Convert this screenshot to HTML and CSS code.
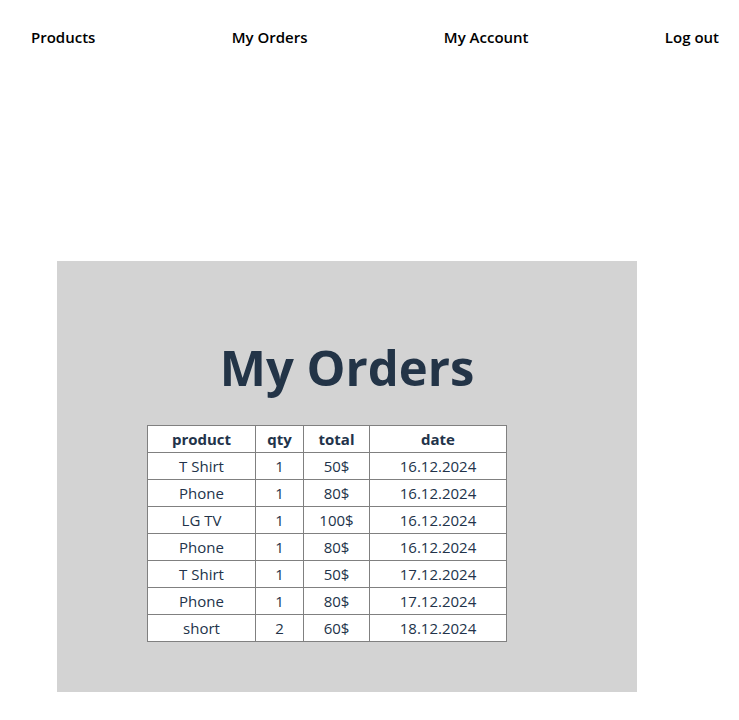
FILE: index.html
```html
<!DOCTYPE html>
<html>
<head>
<meta charset="utf-8">
<link rel="stylesheet" href="styles.css">
</head>
<body>
<nav class="nav">
  <a class="nav-link" href="#">Products</a>
  <a class="nav-link" href="#">My Orders</a>
  <a class="nav-link" href="#">My Account</a>
  <a class="nav-link" href="#">Log out</a>
</nav>
<main class="panel">
  <h1 class="title">My Orders</h1>
  <table class="orders">
    <colgroup>
      <col class="c-product"><col class="c-qty"><col class="c-total"><col class="c-date">
    </colgroup>
    <thead>
      <tr><th>product</th><th>qty</th><th>total</th><th>date</th></tr>
    </thead>
    <tbody>
      <tr><td>T Shirt</td><td>1</td><td>50$</td><td>16.12.2024</td></tr>
      <tr><td>Phone</td><td>1</td><td>80$</td><td>16.12.2024</td></tr>
      <tr><td>LG TV</td><td>1</td><td>100$</td><td>16.12.2024</td></tr>
      <tr><td>Phone</td><td>1</td><td>80$</td><td>16.12.2024</td></tr>
      <tr><td>T Shirt</td><td>1</td><td>50$</td><td>17.12.2024</td></tr>
      <tr><td>Phone</td><td>1</td><td>80$</td><td>17.12.2024</td></tr>
      <tr><td>short</td><td>2</td><td>60$</td><td>18.12.2024</td></tr>
    </tbody>
  </table>
</main>
</body>
</html>
```
FILE: styles.css
```css
body {
  margin: 0;
  font-family: "Open Sans", "Noto Sans", sans-serif;
  color: #22334a;
  background: #fff;
}
.nav {
  display: flex;
  justify-content: space-between;
  align-items: center;
  height: 74px;
  padding: 0 20px 0 31px;
}
.nav-link {
  color: #000;
  text-decoration: none;
  font-weight: 600;
  font-size: 15px;
}
.panel {
  margin: 187px 0 0 57px;
  width: 580px;
  height: 431px;
  box-sizing: border-box;
  padding-top: 73px;
  background: #d3d3d3;
}
.title {
  margin: 0;
  text-align: center;
  font-size: 49px;
  line-height: 67px;
  font-weight: 700;
  color: #233447;
}
.orders {
  margin: 24px 0 0 90px;
  border-collapse: collapse;
  background: #fff;
  font-size: 15px;
  table-layout: fixed;
  width: 359px;
}
.c-product { width: 108px; }
.c-qty { width: 48px; }
.c-total { width: 66px; }
.c-date { width: 137px; }
.orders th, .orders td {
  border: 1px solid #808080;
  padding: 0;
  height: 26px;
  line-height: 24px;
  text-align: center;
  font-weight: 400;
}
.orders th {
  font-weight: 700;
}
```
